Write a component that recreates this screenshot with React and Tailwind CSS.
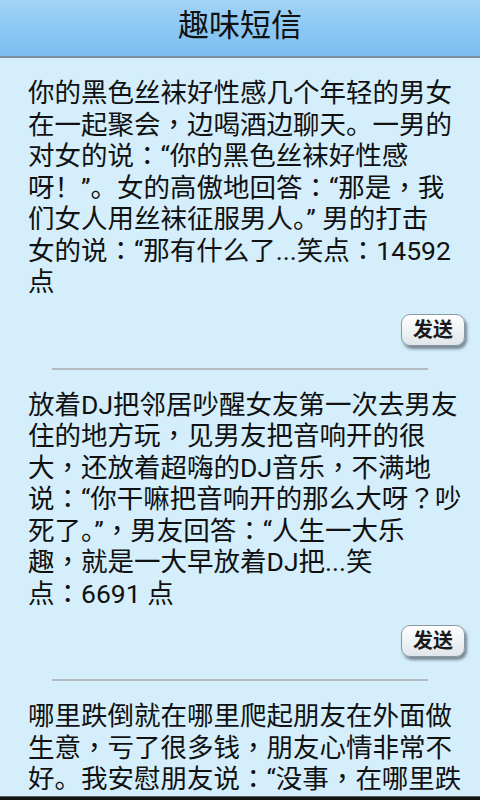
import React from 'react';

const jokes = [
  {
    id: 1,
    lines: [
      '你的黑色丝袜好性感几个年轻的男女',
      '在一起聚会，边喝酒边聊天。一男的',
      '对女的说：“你的黑色丝袜好性感',
      '呀！”。女的高傲地回答：“那是，我',
      '们女人用丝袜征服男人。” 男的打击',
      '女的说：“那有什么了...笑点：14592',
      '点',
    ],
  },
  {
    id: 2,
    lines: [
      '放着DJ把邻居吵醒女友第一次去男友',
      '住的地方玩，见男友把音响开的很',
      '大，还放着超嗨的DJ音乐，不满地',
      '说：“你干嘛把音响开的那么大呀？吵',
      '死了。”，男友回答：“人生一大乐',
      '趣，就是一大早放着DJ把...笑',
      '点：6691 点',
    ],
  },
  {
    id: 3,
    lines: [
      '哪里跌倒就在哪里爬起朋友在外面做',
      '生意，亏了很多钱，朋友心情非常不',
      '好。我安慰朋友说：“没事，在哪里跌',
      '倒就在哪里爬起来！”朋友问：“然后',
      '呢？”...笑点：5210 点',
    ],
  },
];

// the phone font centres ， and ： in their cell, like the TC face does
const Line = ({ text }) => (
  <div className="h-[31.5px] whitespace-nowrap">
    {text.split(/([，：？])/).map((part, i) =>
      /^[，：？]$/.test(part) ? (
        <span key={i} className="font-['Noto_Sans_CJK_TC'] leading-none">{part}</span>
      ) : (
        <React.Fragment key={i}>{part}</React.Fragment>
      )
    )}
  </div>
);

const JokeItem = ({ joke }) => (
  <div className="px-7 pt-[19px]">
    <div className="text-[26.5px] leading-[31.5px] text-[#111]">
      {joke.lines.map((line, i) => (
        <Line key={i} text={line} />
      ))}
    </div>
    <div className="flex justify-end mt-[16px] -mr-[13px]">
      <button className="w-[64px] h-[32px] rounded-[9px] border border-[#8a98a4] bg-gradient-to-b from-[#ffffff] to-[#dfe6ea] shadow-[2px_3px_3px_rgba(40,50,60,0.55)] text-[20px] font-bold text-[#1a1a1a] flex items-center justify-center">
        发送
      </button>
    </div>
    <div className="mt-[22px] mx-6 h-[2px] bg-[#b4bcc2]" />
  </div>
);

export default function App() {
  return (
    <div
      className="w-[480px] h-[800px] flex flex-col overflow-hidden bg-[#d4eefb]"
      style={{ fontFamily: "Roboto, 'Noto Sans CJK SC', sans-serif" }}
    >
      {/* Title bar */}
      <div className="h-[58px] shrink-0 flex items-center justify-center bg-gradient-to-b from-[#a2d4f5] via-[#8cc8f3] to-[#7cbdf0] border-b-2 border-[#7d8e9c]">
        <h1 className="text-[31px] leading-none text-[#111] -mt-[6px]">趣味短信</h1>
      </div>

      {/* List */}
      <div className="flex-1 overflow-hidden">
        {jokes.map((joke) => (
          <JokeItem key={joke.id} joke={joke} />
        ))}
      </div>

      <div className="h-[4px] shrink-0 bg-[#151515] border-t border-[#5a5a5a]" />
    </div>
  );
}
